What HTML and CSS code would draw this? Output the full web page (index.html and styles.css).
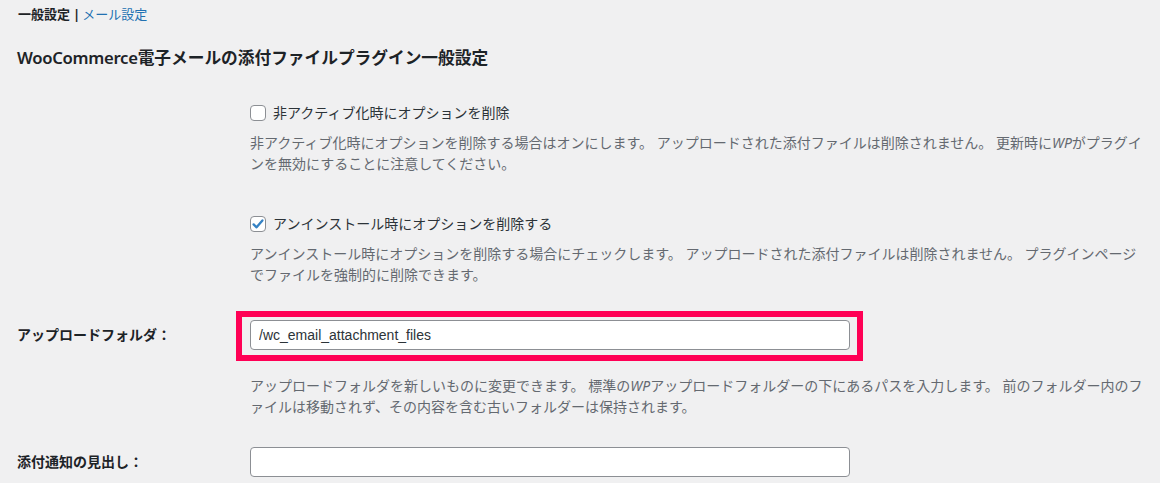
FILE: index.html
```html
<!DOCTYPE html>
<html lang="ja">
<head>
<meta charset="utf-8">
<link rel="stylesheet" href="styles.css">
</head>
<body>
<div class="wrap">
  <div class="subsubsub"><span class="current">一般設定</span><span class="sep">|</span><a class="tab-link" href="#">メール設定</a></div>
  <h2 class="page-title"><span class="latin">WooCommerce</span>電子メールの添付ファイルプラグイン一般設定</h2>

  <div class="form">
    <div class="row row-first">
      <div class="th"></div>
      <div class="td">
        <label class="cb-label">
          <span class="cb"></span>
          <span>非アクティブ化時にオプションを削除</span>
        </label>
        <p class="description">非アクティブ化時にオプションを削除する場合はオンにします。 アップロードされた添付ファイルは削除されません。 更新時に<em>WP</em>がプラグインを無効にすることに注意してください。</p>
      </div>
    </div>

    <div class="row row-second">
      <div class="th"></div>
      <div class="td">
        <label class="cb-label">
          <span class="cb checked"><svg viewBox="0 0 16 16" width="16" height="16"><path d="M3.6 8.4 L6.6 11.3 L12.4 4.4" fill="none" stroke="#3582c4" stroke-width="2.3" stroke-linecap="round" stroke-linejoin="round"/></svg></span>
          <span>アンインストール時にオプションを削除する</span>
        </label>
        <p class="description">アンインストール時にオプションを削除する場合にチェックします。 アップロードされた添付ファイルは削除されません。 プラグインページでファイルを強制的に削除できます。</p>
      </div>
    </div>

    <div class="row row-input row-third">
      <div class="th">アップロードフォルダ：</div>
      <div class="td">
        <div class="field">
          <input class="text-input" type="text" value="/wc_email_attachment_files">
          <span class="highlight"></span>
        </div>
        <p class="description desc-after-input">アップロードフォルダを新しいものに変更できます。 標準の<em>WP</em>アップロードフォルダーの下にあるパスを入力します。 前のフォルダー内のファイルは移動されず、その内容を含む古いフォルダーは保持されます。</p>
      </div>
    </div>

    <div class="row row-input row-fourth">
      <div class="th">添付通知の見出し：</div>
      <div class="td">
        <div class="field">
          <input class="text-input" type="text" value="">
        </div>
      </div>
    </div>
  </div>
</div>
</body>
</html>
```

FILE: styles.css
```css
html, body {
  margin: 0;
  padding: 0;
  background: #f0f0f1;
}
body {
  font-family: "Noto Sans", "Noto Sans CJK JP", sans-serif;
  color: #1d2327;
  font-size: 14px;
}
.wrap {
  padding: 0 10px 0 17px;
}
.subsubsub {
  margin-top: 1px;
  height: 26px;
  line-height: 26px;
  font-size: 13px;
  padding-left: 1px;
}
.subsubsub .current {
  font-weight: 700;
  color: #1d2327;
}
.subsubsub .sep {
  font-weight: 700;
  color: #1d2327;
  margin: 0 2px 0 3px;
}
.subsubsub .tab-link {
  color: #2271b1;
  text-decoration: none;
}
.page-title {
  margin: 19px 0 0;
  font-size: 16.7px;
  line-height: 24px;
  font-weight: 700;
  color: #1d2327;
}
.page-title .latin {
  font-weight: 600;
  letter-spacing: -0.3px;
}
.row {
  display: grid;
  grid-template-columns: 233px 1fr;
}
.row-first { margin-top: 32px; }
.row-second { margin-top: 39px; }
.row-third { margin-top: 35px; }
.row-fourth { margin-top: 30px; }
.th {
  font-weight: 700;
  font-size: 14px;
  line-height: 30px;
  color: #1d2327;
}
.td {
  min-width: 0;
}
.cb-label {
  display: flex;
  align-items: center;
  gap: 7px;
  height: 21px;
  line-height: 21px;
  color: #2c3338;
}
.cb {
  width: 16px;
  height: 16px;
  box-sizing: border-box;
  border: 1px solid #8c8f94;
  border-radius: 4px;
  background: #fff;
  position: relative;
  flex: none;
}
.cb svg {
  position: absolute;
  left: -1px;
  top: -1px;
}
.description {
  margin: 9px 0 0;
  color: #646970;
  font-size: 14px;
  line-height: 21px;
  line-break: normal;
}
.description em {
  font-style: italic;
}
.desc-after-input {
  margin-top: 25px;
}
.field {
  position: relative;
  width: 600px;
  height: 30px;
}
.text-input {
  display: block;
  box-sizing: border-box;
  width: 600px;
  height: 30px;
  margin: 0;
  padding: 0 8px;
  border: 1px solid #8c8f94;
  border-radius: 4px;
  background: #fff;
  font-family: "Liberation Sans", "Noto Sans CJK JP", sans-serif;
  font-size: 14px;
  color: #2c3338;
  outline: none;
}
.highlight {
  position: absolute;
  left: -14px;
  top: -9px;
  width: 627px;
  height: 50px;
  box-sizing: border-box;
  border: 6px solid #ff0055;
  pointer-events: none;
}
```
